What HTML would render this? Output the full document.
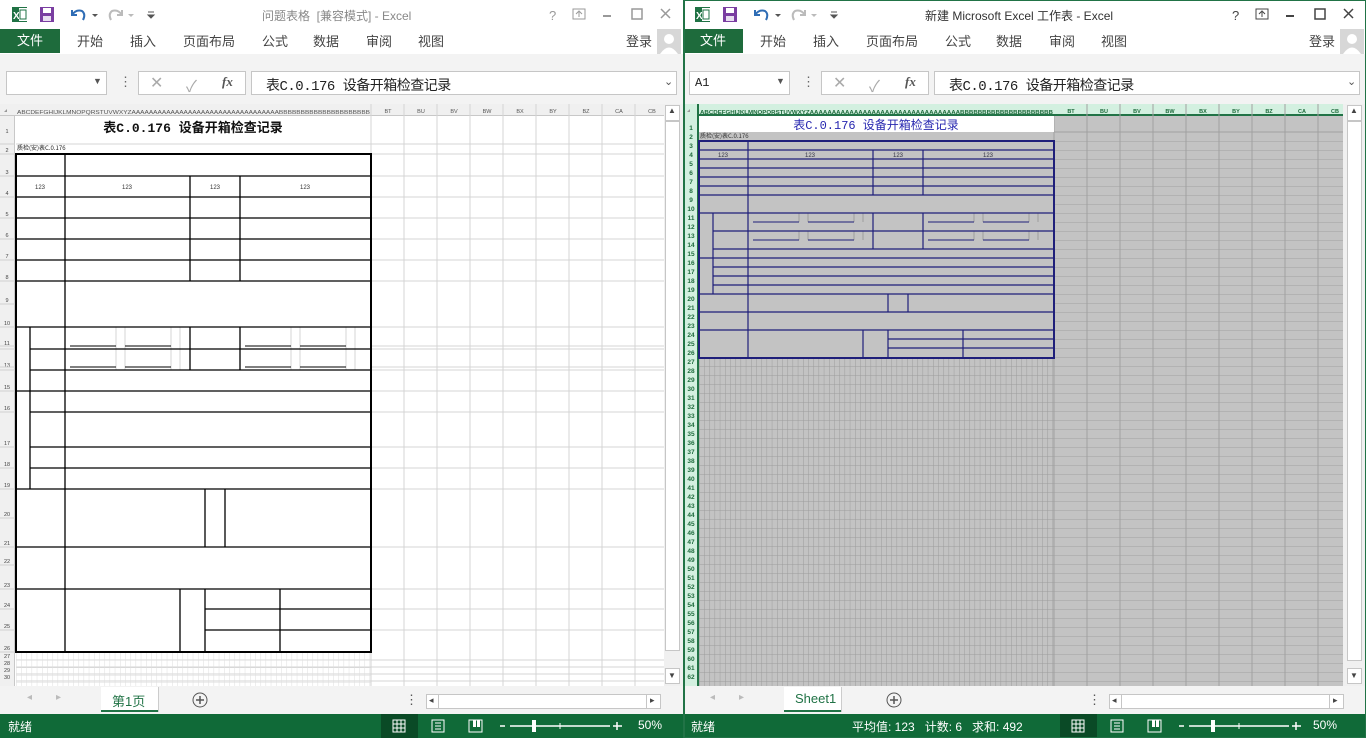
<!DOCTYPE html>
<html><head><meta charset="utf-8">
<style>
*{margin:0;padding:0;box-sizing:border-box}
body{width:1366px;height:738px;overflow:hidden;background:#fff;font-family:"Liberation Sans","Noto Sans CJK SC",sans-serif;position:relative}
.win{position:absolute;top:0;width:683px;height:738px;background:#f3f3f3;overflow:hidden}
.a{position:absolute}
.t{position:absolute;font-size:13px;color:#444;white-space:nowrap}
.tb{position:absolute;left:0;top:0;width:683px;height:29px;background:#fff}
.rb{position:absolute;left:0;top:29px;width:683px;height:25px;background:#fff}
.file{position:absolute;left:0;top:29px;width:60px;height:24px;background:#1e6b3c;color:#fff;font-size:13px;text-align:center;line-height:24px}
.box{position:absolute;background:#fff;border:1px solid #c6c6c6}
.sb{position:absolute;left:0;top:714px;width:683px;height:24px;background:#106a38;color:#fff;font-size:12px}
.sb span{position:absolute;top:4px;white-space:nowrap}
</style></head><body>

<!-- LEFT WINDOW -->
<div class="win" style="left:0">
<div class="tb"></div><div class="rb"></div>
<svg class="a" style="left:0;top:0" width="683" height="29">
<rect x="12" y="7" width="15" height="15" fill="#1f7244"/><rect x="19" y="8" width="8" height="13" fill="#fff"/><text x="13" y="19" font-size="10" font-weight="bold" fill="#fff" font-family="Liberation Sans">X</text>
<rect x="20" y="10" width="6" height="9" fill="none" stroke="#1f7244" stroke-width="1"/>
<rect x="40" y="7" width="14" height="15" fill="#7a3ea1"/><rect x="43" y="8" width="8" height="5" fill="#fff"/><rect x="43" y="16" width="8" height="5" fill="#e8dff0"/>
<path d="M72 10 L72 15 L77 15 M72 15 Q76 9 82 11 Q86 14 83 20" fill="none" stroke="#2f6db5" stroke-width="2"/>
<path d="M92 14 l3 3 l3 -3z" fill="#555"/>
<path d="M122 10 L122 15 L117 15 M122 15 Q118 9 112 11 Q108 14 111 20" fill="none" stroke="#bbb" stroke-width="2"/>
<path d="M128 14 l3 3 l3 -3z" fill="#bbb"/>
<path d="M148 12 h6 M148 15 l3 3 l3 -3z" stroke="#555" fill="#555"/>
<text x="549" y="20" font-size="13" fill="#999" font-family="Liberation Sans">?</text>
<rect x="573" y="9" width="12" height="10" fill="none" stroke="#999"/><path d="M579 17 v-5 M576 14 l3 -3 l3 3" stroke="#999" fill="none"/>
<path d="M603 16 h8" stroke="#999" stroke-width="2"/>
<rect x="632" y="9" width="10" height="10" fill="none" stroke="#999" stroke-width="1.5"/>
<path d="M661 9 l9 9 M670 9 l-9 9" stroke="#999" stroke-width="1.5"/>
</svg>
<div class="t" style="left:262px;top:7px;color:#888;font-size:12px">问题表格 &nbsp;[兼容模式] - Excel</div>
<div class="file">文件</div>
<div class="t" style="left:77px;top:31px">开始</div><div class="t" style="left:130px;top:31px">插入</div><div class="t" style="left:183px;top:31px">页面布局</div><div class="t" style="left:262px;top:31px">公式</div><div class="t" style="left:313px;top:31px">数据</div><div class="t" style="left:366px;top:31px">审阅</div><div class="t" style="left:418px;top:31px">视图</div><div class="t" style="left:626px;top:31px">登录</div>
<div class="a" style="left:657px;top:29px;width:24px;height:25px;background:#d7d7d7"></div>
<svg class="a" style="left:657px;top:29px" width="24" height="25"><circle cx="12" cy="10" r="5" fill="#fff"/><path d="M3 25 Q12 12 21 25z" fill="#fff"/></svg>
<div class="box" style="left:6px;top:71px;width:101px;height:24px"></div><div class="t" style="left:93px;top:76px;font-size:9px;color:#555">▼</div>
<div class="t" style="left:119px;top:74px;color:#666">⋮</div>
<div class="box" style="left:138px;top:71px;width:108px;height:24px"></div>
<div class="t" style="left:150px;top:73px;color:#aaa;font-size:16px">✕</div><div class="t" style="left:186px;top:73px;color:#aaa;font-size:16px">✓</div><div class="t" style="left:222px;top:74px;color:#555;font-style:italic;font-family:'Liberation Serif';font-weight:bold">fx</div>
<div class="box" style="left:251px;top:71px;width:426px;height:24px"></div>
<div class="t" style="left:266px;top:75px;color:#222;font-size:14px;font-family:'Liberation Mono','Noto Sans CJK SC',monospace;letter-spacing:-0.5px">表C.0.176 设备开箱检查记录</div>
<div class="t" style="left:664px;top:75px;color:#555;font-size:11px">⌄</div>
<!-- sheet -->
<div class="a" style="left:0;top:104px;width:664px;height:582px;background:#fff"></div>
<div class="a" style="left:0;top:104px;width:15px;height:582px;background:#f0f0f0;border-right:1px solid #c8c8c8"></div>
<div class="a" style="left:0;top:104px;width:664px;height:12px;background:#f0f0f0;border-bottom:1px solid #c8c8c8"></div>
<svg class="a" style="left:0;top:0" width="683" height="738" font-family="Liberation Sans">
<defs><pattern id="fineL" x="16" y="0" width="5.2" height="7.5" patternUnits="userSpaceOnUse"><path d="M0 0 V8 M0 0 H6" stroke="#ddd" stroke-width="1"/></pattern></defs>
<text x="17" y="114" font-size="5.5" fill="#555" textLength="353" lengthAdjust="spacingAndGlyphs">ABCDEFGHIJKLMNOPQRSTUVWXYZAAAAAAAAAAAAAAAAAAAAAAAAAAAAAAAAAABBBBBBBBBBBBBBBBBBBBB</text>
<g font-size="5.5" fill="#555" text-anchor="middle"><text x="388" y="113">BT</text><text x="421" y="113">BU</text><text x="454" y="113">BV</text><text x="487" y="113">BW</text><text x="520" y="113">BX</text><text x="553" y="113">BY</text><text x="586" y="113">BZ</text><text x="619" y="113">CA</text><text x="652" y="113">CB</text></g>
<g stroke="#d4d4d4"><path d="M371 104V686M404 104V686M437 104V686M470 104V686M503 104V686M536 104V686M569 104V686M602 104V686M635 104V686"/>
<path d="M16 144H664M16 154H664M371 176H664M371 197H664M371 218H664M371 239H664M371 260H664M371 281H664M371 327H664M371 346H664M371 349H664M371 367H664M371 370H664M371 391H664M371 412H664M371 447H664M371 468H664M371 489H664M371 547H664M371 589H664M371 609H664M371 630H664M16 660H664M16 667H664M16 674H664M16 681H664"/>
<path d="M116 327V370M125 327V370M171 327V370M180 327V370M291 327V370M300 327V370M346 327V370M355 327V370"/></g>
<rect x="16" y="653" width="355" height="33" fill="url(#fineL)"/>
<text x="193" y="132" font-size="13" text-anchor="middle" fill="#111" font-family="Liberation Mono,Noto Sans CJK SC" font-weight="bold">表C.0.176 设备开箱检查记录</text>
<text x="17" y="150" font-size="6" fill="#222" font-family="Noto Sans CJK SC">质检(安)表C.0.176</text>
<g font-size="6" fill="#333" text-anchor="middle"><text x="40" y="189">123</text><text x="127" y="189">123</text><text x="215" y="189">123</text><text x="305" y="189">123</text></g>
<g stroke="#000" stroke-width="1.3" fill="none">
<rect x="16" y="154" width="355" height="498" stroke-width="2"/>
<path d="M16 176H371M16 197H371M16 218H371M16 239H371M16 260H371M16 281H371M16 327H371M30 349H371M30 370H371M16 391H371M30 412H371M30 447H371M30 468H371M16 489H371M16 547H371M16 589H371M205 609H371M205 630H371"/>
<path d="M65 154V652M190 176V281M190 327V370M240 176V281M240 327V370M30 327V489M205 489V547M225 489V547M180 589V652M205 589V652M280 589V652"/>
<path d="M70 346H116M125 346H171M245 346H291M300 346H346M70 367H116M125 367H171M245 367H291M300 367H346" stroke-width="1"/>
</g>
<g font-size="5.5" fill="#444" text-anchor="middle"><text x="7" y="133">1</text><text x="7" y="152">2</text><text x="7" y="174">3</text><text x="7" y="195">4</text><text x="7" y="216">5</text><text x="7" y="237">6</text><text x="7" y="258">7</text><text x="7" y="279">8</text><text x="7" y="302">9</text><text x="7" y="325">10</text><text x="7" y="345">11</text><text x="7" y="367">13</text><text x="7" y="389">15</text><text x="7" y="410">16</text><text x="7" y="445">17</text><text x="7" y="466">18</text><text x="7" y="487">19</text><text x="7" y="516">20</text><text x="7" y="545">21</text><text x="7" y="563">22</text><text x="7" y="587">23</text><text x="7" y="607">24</text><text x="7" y="628">25</text><text x="7" y="650">26</text><text x="7" y="658">27</text><text x="7" y="665">28</text><text x="7" y="672">29</text><text x="7" y="679">30</text></g>
<g stroke="#d0d0d0"><path d="M0 144H15M0 154H15M0 176H15M0 197H15M0 218H15M0 239H15M0 260H15M0 281H15M0 304H15M0 327H15M0 346H15M0 349H15M0 367H15M0 370H15M0 391H15M0 412H15M0 447H15M0 468H15M0 489H15M0 518H15M0 547H15M0 565H15M0 589H15M0 609H15M0 630H15M0 652H15"/></g>
<path d="M4 112 l3 -3 v3z" fill="#999"/>
</svg>
<div class="a" style="left:664px;top:104px;width:19px;height:582px;background:#f0f0f0"></div>
<div class="box" style="left:665px;top:105px;width:15px;height:16px"></div><div class="box" style="left:665px;top:121px;width:15px;height:530px;background:#fff"></div><div class="box" style="left:665px;top:668px;width:15px;height:16px"></div>
<div class="t" style="left:668px;top:106px;font-size:8px;color:#444">▲</div><div class="t" style="left:668px;top:671px;font-size:8px;color:#444">▼</div>
<!-- tab bar -->
<div class="t" style="left:27px;top:692px;color:#bbb;font-size:10px">◂</div><div class="t" style="left:56px;top:692px;color:#bbb;font-size:10px">▸</div>
<div class="a" style="left:101px;top:687px;width:57px;height:25px;background:#fff;border-bottom:2px solid #217346;box-shadow:1px 0 0 #ccc"></div>
<div class="t" style="left:112px;top:691px;color:#217346">第1页</div>
<svg class="a" style="left:191px;top:691px" width="18" height="18"><circle cx="9" cy="9" r="7" fill="none" stroke="#555"/><path d="M5 9h8M9 5v8" stroke="#555" stroke-width="1.5"/></svg>
<div class="t" style="left:405px;top:692px;color:#555">⋮</div>
<div class="box" style="left:426px;top:694px;width:235px;height:15px"></div>
<div class="a" style="left:426px;top:694px;width:13px;height:15px;border-right:1px solid #c6c6c6"></div><div class="a" style="left:646px;top:694px;width:15px;height:15px;border-left:1px solid #c6c6c6"></div>
<div class="t" style="left:429px;top:695px;font-size:9px">◂</div><div class="t" style="left:650px;top:695px;font-size:9px">▸</div>
<div class="sb"><span style="left:8px">就绪</span>
<div class="a" style="left:381px;top:0;width:37px;height:24px;background:#0a4a26"></div>
<svg class="a" style="left:0;top:0" width="683" height="24"><g stroke="#fff" fill="none"><rect x="393" y="6" width="12" height="12"/><path d="M397 6v12M401 6v12M393 10h12M393 14h12"/><rect x="432" y="6" width="12" height="12"/><path d="M435 9h6M435 12h6M435 15h6"/><rect x="469" y="6" width="13" height="12"/></g><rect x="473" y="6" width="3" height="7" fill="#fff"/><rect x="477" y="6" width="3" height="7" fill="#fff"/>
<path d="M500 12h5M510 12h100M613 12h9M617 8v8" stroke="#fff" stroke-width="1.5"/><path d="M560 9v6" stroke="#fff"/><rect x="532" y="6" width="4" height="12" fill="#fff"/></svg>
<span style="left:638px">50%</span></div>
</div>

<!-- RIGHT WINDOW -->
<div class="win" style="left:683px">
<div class="tb"></div><div class="rb"></div>
<svg class="a" style="left:0;top:0" width="683" height="29">
<rect x="12" y="7" width="15" height="15" fill="#1f7244"/><rect x="19" y="8" width="8" height="13" fill="#fff"/><text x="13" y="19" font-size="10" font-weight="bold" fill="#fff" font-family="Liberation Sans">X</text>
<rect x="20" y="10" width="6" height="9" fill="none" stroke="#1f7244" stroke-width="1"/>
<rect x="40" y="7" width="14" height="15" fill="#7a3ea1"/><rect x="43" y="8" width="8" height="5" fill="#fff"/><rect x="43" y="16" width="8" height="5" fill="#e8dff0"/>
<path d="M72 10 L72 15 L77 15 M72 15 Q76 9 82 11 Q86 14 83 20" fill="none" stroke="#2f6db5" stroke-width="2"/>
<path d="M92 14 l3 3 l3 -3z" fill="#555"/>
<path d="M122 10 L122 15 L117 15 M122 15 Q118 9 112 11 Q108 14 111 20" fill="none" stroke="#bbb" stroke-width="2"/>
<path d="M128 14 l3 3 l3 -3z" fill="#bbb"/>
<path d="M148 12 h6 M148 15 l3 3 l3 -3z" stroke="#555" fill="#555"/>
<text x="549" y="20" font-size="13" fill="#444" font-family="Liberation Sans">?</text>
<rect x="573" y="9" width="12" height="10" fill="none" stroke="#444"/><path d="M579 17 v-5 M576 14 l3 -3 l3 3" stroke="#444" fill="none"/>
<path d="M603 16 h8" stroke="#444" stroke-width="2"/>
<rect x="632" y="9" width="10" height="10" fill="none" stroke="#444" stroke-width="1.5"/>
<path d="M661 9 l9 9 M670 9 l-9 9" stroke="#444" stroke-width="1.5"/>
</svg>
<div class="t" style="left:242px;top:7px;color:#333;font-size:12px">新建 Microsoft Excel 工作表 - Excel</div>
<div class="file">文件</div>
<div class="t" style="left:77px;top:31px">开始</div><div class="t" style="left:130px;top:31px">插入</div><div class="t" style="left:183px;top:31px">页面布局</div><div class="t" style="left:262px;top:31px">公式</div><div class="t" style="left:313px;top:31px">数据</div><div class="t" style="left:366px;top:31px">审阅</div><div class="t" style="left:418px;top:31px">视图</div><div class="t" style="left:626px;top:31px">登录</div>
<div class="a" style="left:657px;top:29px;width:24px;height:25px;background:#d7d7d7"></div>
<svg class="a" style="left:657px;top:29px" width="24" height="25"><circle cx="12" cy="10" r="5" fill="#fff"/><path d="M3 25 Q12 12 21 25z" fill="#fff"/></svg>
<div class="box" style="left:6px;top:71px;width:101px;height:24px"></div><div class="t" style="left:12px;top:76px;font-size:12px;color:#222;font-family:'Liberation Mono'">A1</div><div class="t" style="left:93px;top:76px;font-size:9px;color:#555">▼</div>
<div class="t" style="left:119px;top:74px;color:#666">⋮</div>
<div class="box" style="left:138px;top:71px;width:108px;height:24px"></div>
<div class="t" style="left:150px;top:73px;color:#aaa;font-size:16px">✕</div><div class="t" style="left:186px;top:73px;color:#aaa;font-size:16px">✓</div><div class="t" style="left:222px;top:74px;color:#555;font-style:italic;font-family:'Liberation Serif';font-weight:bold">fx</div>
<div class="box" style="left:251px;top:71px;width:426px;height:24px"></div>
<div class="t" style="left:266px;top:75px;color:#222;font-size:14px;font-family:'Liberation Mono','Noto Sans CJK SC',monospace;letter-spacing:-0.5px">表C.0.176 设备开箱检查记录</div>
<div class="t" style="left:664px;top:75px;color:#555;font-size:11px">⌄</div>
<!-- sheet -->
<div class="a" style="left:16px;top:116px;width:644px;height:570px;background:#c3c3c3"></div>
<div class="a" style="left:0;top:104px;width:16px;height:582px;background:#d3f0e0;border-right:2px solid #217346"></div>
<div class="a" style="left:16px;top:104px;width:644px;height:12px;background:#d3f0e0;border-bottom:2px solid #217346"></div>
<svg class="a" style="left:0;top:0" width="683" height="738" font-family="Liberation Sans">
<defs><pattern id="fineR" x="16" y="141" width="5.2" height="9" patternUnits="userSpaceOnUse"><path d="M0 0 V9 M0 0 H6" stroke="#9c9c9c" stroke-width="1"/></pattern>
<pattern id="rowsR" x="0" y="141" width="10" height="9" patternUnits="userSpaceOnUse"><path d="M0 0 H10" stroke="#a0a0a0"/></pattern></defs>
<rect x="16" y="358" width="355" height="328" fill="url(#fineR)"/>
<rect x="371" y="141" width="289" height="545" fill="url(#rowsR)"/>
<path d="M371 132H660" stroke="#a0a0a0"/>
<g stroke="#a0a0a0"><path d="M371 116V686M404 104V686M437 104V686M470 104V686M503 104V686M536 104V686M569 104V686M602 104V686M635 104V686"/></g>
<rect x="16" y="116" width="355" height="16" fill="#fff"/>
<text x="17" y="114" font-size="5.5" fill="#1e6b3c" font-weight="bold" textLength="353" lengthAdjust="spacingAndGlyphs">ABCDEFGHIJKLMNOPQRSTUVWXYZAAAAAAAAAAAAAAAAAAAAAAAAAAAAAAAAAABBBBBBBBBBBBBBBBBBBBB</text>
<g font-size="5.5" fill="#1e6b3c" font-weight="bold" text-anchor="middle"><text x="388" y="113">BT</text><text x="421" y="113">BU</text><text x="454" y="113">BV</text><text x="487" y="113">BW</text><text x="520" y="113">BX</text><text x="553" y="113">BY</text><text x="586" y="113">BZ</text><text x="619" y="113">CA</text><text x="652" y="113">CB</text></g>
<g stroke="#9c9c9c"><path d="M116 213V222M125 213V222M171 213V222M180 213V222M291 213V222M300 213V222M346 213V222M355 213V222M116 231V240M125 231V240M171 231V240M180 231V240M291 231V240M300 231V240M346 231V240M355 231V240"/></g>
<text x="193" y="129" font-size="12" text-anchor="middle" fill="#2828b0" font-family="Liberation Mono,Noto Sans CJK SC">表C.0.176 设备开箱检查记录</text>
<text x="17" y="138" font-size="6" fill="#333" font-family="Noto Sans CJK SC">质检(安)表C.0.176</text>
<g font-size="6" fill="#334" text-anchor="middle"><text x="40" y="157">123</text><text x="127" y="157">123</text><text x="215" y="157">123</text><text x="305" y="157">123</text></g>
<g stroke="#1f1f7a" stroke-width="1.2" fill="none">
<rect x="16" y="141" width="355" height="217" stroke-width="2"/>
<path d="M16 150H371M16 159H371M16 168H371M16 177H371M16 186H371M16 195H371M16 213H371M30 231H371M30 249H371M16 258H371M30 267H371M30 276H371M30 285H371M16 294H371M16 312H371M16 330H371M205 339H371M205 348H371"/>
<path d="M65 141V358M190 150V195M190 213V249M240 150V195M240 213V249M30 213V294M205 294V312M225 294V312M180 330V358M205 330V358M280 330V358"/>
<path d="M70 222H116M125 222H171M245 222H291M300 222H346M70 240H116M125 240H171M245 240H291M300 240H346" stroke-width="1"/>
</g>
<g font-size="6.5" fill="#1e6b3c" font-weight="bold" text-anchor="middle">
<text x="8" y="130">1</text><text x="8" y="139">2</text>
<text x="8" y="148">3</text><text x="8" y="157">4</text><text x="8" y="166">5</text><text x="8" y="175">6</text><text x="8" y="184">7</text><text x="8" y="193">8</text><text x="8" y="202">9</text><text x="8" y="211">10</text><text x="8" y="220">11</text><text x="8" y="229">12</text><text x="8" y="238">13</text><text x="8" y="247">14</text><text x="8" y="256">15</text><text x="8" y="265">16</text><text x="8" y="274">17</text><text x="8" y="283">18</text><text x="8" y="292">19</text><text x="8" y="301">20</text><text x="8" y="310">21</text><text x="8" y="319">22</text><text x="8" y="328">23</text><text x="8" y="337">24</text><text x="8" y="346">25</text><text x="8" y="355">26</text><text x="8" y="364">27</text><text x="8" y="373">28</text><text x="8" y="382">29</text><text x="8" y="391">30</text><text x="8" y="400">31</text><text x="8" y="409">32</text><text x="8" y="418">33</text><text x="8" y="427">34</text><text x="8" y="436">35</text><text x="8" y="445">36</text><text x="8" y="454">37</text><text x="8" y="463">38</text><text x="8" y="472">39</text><text x="8" y="481">40</text><text x="8" y="490">41</text><text x="8" y="499">42</text><text x="8" y="508">43</text><text x="8" y="517">44</text><text x="8" y="526">45</text><text x="8" y="535">46</text><text x="8" y="544">47</text><text x="8" y="553">48</text><text x="8" y="562">49</text><text x="8" y="571">50</text><text x="8" y="580">51</text><text x="8" y="589">52</text><text x="8" y="598">53</text><text x="8" y="607">54</text><text x="8" y="616">55</text><text x="8" y="625">56</text><text x="8" y="634">57</text><text x="8" y="643">58</text><text x="8" y="652">59</text><text x="8" y="661">60</text><text x="8" y="670">61</text><text x="8" y="679">62</text></g>
<path d="M4 112 l3 -3 v3z" fill="#999"/>
</svg>
<div class="a" style="left:660px;top:104px;width:23px;height:582px;background:#f0f0f0"></div>
<div class="box" style="left:664px;top:105px;width:15px;height:16px"></div><div class="box" style="left:664px;top:121px;width:15px;height:540px;background:#fff"></div><div class="box" style="left:664px;top:668px;width:15px;height:16px"></div>
<div class="t" style="left:667px;top:106px;font-size:8px;color:#444">▲</div><div class="t" style="left:667px;top:671px;font-size:8px;color:#444">▼</div>
<div class="t" style="left:27px;top:692px;color:#bbb;font-size:10px">◂</div><div class="t" style="left:56px;top:692px;color:#bbb;font-size:10px">▸</div>
<div class="a" style="left:101px;top:687px;width:57px;height:25px;background:#fff;border-bottom:2px solid #217346;box-shadow:1px 0 0 #ccc"></div>
<div class="t" style="left:112px;top:691px;color:#217346">Sheet1</div>
<svg class="a" style="left:202px;top:691px" width="18" height="18"><circle cx="9" cy="9" r="7" fill="none" stroke="#555"/><path d="M5 9h8M9 5v8" stroke="#555" stroke-width="1.5"/></svg>
<div class="t" style="left:405px;top:692px;color:#555">⋮</div>
<div class="box" style="left:426px;top:694px;width:235px;height:15px"></div>
<div class="a" style="left:426px;top:694px;width:13px;height:15px;border-right:1px solid #c6c6c6"></div><div class="a" style="left:646px;top:694px;width:15px;height:15px;border-left:1px solid #c6c6c6"></div>
<div class="t" style="left:429px;top:695px;font-size:9px">◂</div><div class="t" style="left:650px;top:695px;font-size:9px">▸</div>
<div class="sb"><span style="left:8px">就绪</span><span style="left:169px">平均值: 123 &nbsp;&nbsp;计数: 6 &nbsp;&nbsp;求和: 492</span>
<div class="a" style="left:377px;top:0;width:37px;height:24px;background:#0a4a26"></div>
<svg class="a" style="left:-4px;top:0" width="683" height="24"><g stroke="#fff" fill="none"><rect x="393" y="6" width="12" height="12"/><path d="M397 6v12M401 6v12M393 10h12M393 14h12"/><rect x="432" y="6" width="12" height="12"/><path d="M435 9h6M435 12h6M435 15h6"/><rect x="469" y="6" width="13" height="12"/></g><rect x="473" y="6" width="3" height="7" fill="#fff"/><rect x="477" y="6" width="3" height="7" fill="#fff"/>
<path d="M500 12h5M510 12h100M613 12h9M617 8v8" stroke="#fff" stroke-width="1.5"/><path d="M560 9v6" stroke="#fff"/><rect x="532" y="6" width="4" height="12" fill="#fff"/></svg>
<span style="left:630px">50%</span></div>
<div class="a" style="left:0;top:0;width:683px;height:738px;border:1px solid #217346;border-left-width:2px"></div>
</div>
</body></html>
